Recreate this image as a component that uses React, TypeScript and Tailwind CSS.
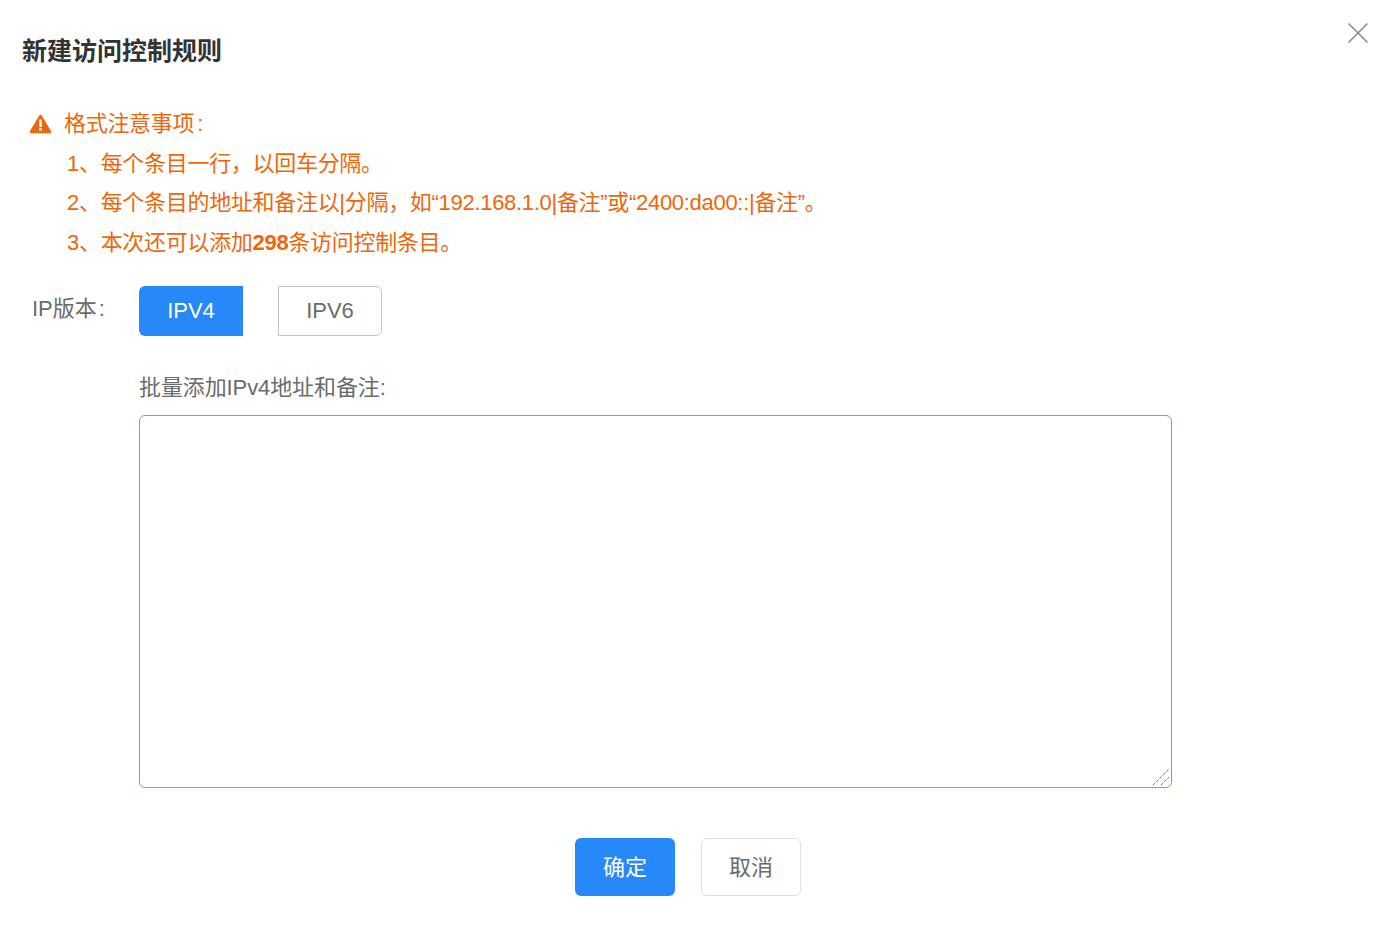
import {X} from "lucide-react";

export default function App() {
    return (
        <div className="relative h-[926px] bg-white overflow-hidden [font-family:'Liberation_Sans','Noto_Sans_CJK_SC',sans-serif]">
            <button className="absolute top-[15px] right-[24px] text-[#8c8c8c]">
                <X size={36} strokeWidth={1.1}></X>
            </button>

            <h1 className="pl-[22px] pt-[35px] text-[25px] leading-[33px] font-bold text-[#333]">新建访问控制规则</h1>

            <div className="mt-[36px] pl-[29px] text-[22px] leading-[39.5px] text-[#ed670a]">
                <div className="flex items-center gap-[12px]">
                    <svg width="23" height="22" viewBox="0 0 23 22">
                        <path fill="#ed670a" stroke="#ed670a" strokeWidth="2.6" strokeLinejoin="round" d="M11.5 3 L21 19 L2 19 Z" />
                        <rect x="10.2" y="6.5" width="2.6" height="7.5" fill="#fff" />
                        <rect x="10.2" y="15" width="2.6" height="2.6" fill="#fff" />
                    </svg>
                    <span className="tracking-[-0.3px]">格式注意事项<span className="ml-[3px]">:</span></span>
                </div>
                <div className="pl-[38px] tracking-[-0.3px]">
                    <p>1、每个条目一行&#xFF0C;以回车分隔。</p>
                    <p>2、每个条目的地址和备注以|分隔&#xFF0C;如“192.168.1.0|备注”或“2400:da00::|备注”。</p>
                    <p>3、本次还可以添加<b>298</b>条访问控制条目。</p>
                </div>
            </div>

            <div className="mt-[24px] flex pl-[32px] text-[22px] text-[#6b6b6b]">
                <label className="w-[107px] leading-[46px]">IP版本<span className="ml-[2px]">:</span></label>
                <div className="flex gap-[35px] leading-[48px]">
                    <button className="w-[104px] h-[50px] bg-[#2688f9] text-white rounded-l-[6px]">IPV4</button>
                    <button className="w-[104px] h-[50px] border border-[#c0c4cc] rounded-r-[6px]">IPV6</button>
                </div>
            </div>

            <div className="mt-[33px] pl-[139px] text-[22px] text-[#6b6b6b]">
                <div className="leading-[38px] tracking-[-0.1px]">批量添加IPv4地址和备注:</div>
                <div className="relative mt-[8px] w-[1033px]">
                    <textarea className="block w-full h-[373px] border border-[#67c23a] rounded-[6px] outline-none resize-none"></textarea>
                    <svg className="absolute right-[1px] bottom-[1px]" width="20" height="20" viewBox="0 0 20 20">
                        <path d="M2 18 L18 2 M10 18 L18 10" stroke="#444" strokeWidth="1" strokeDasharray="1 1" fill="none" />
                    </svg>
                </div>
            </div>

            <div className="mt-[50px] pr-[24px] flex justify-center gap-[26px] text-[22px]">
                <button className="w-[100px] h-[58px] bg-[#2688f9] text-white rounded-[6px]">确定</button>
                <button className="w-[100px] h-[58px] border border-[#dcdfe6] text-[#6b6b6b] rounded-[6px]">取消</button>
            </div>
        </div>
    );
}
